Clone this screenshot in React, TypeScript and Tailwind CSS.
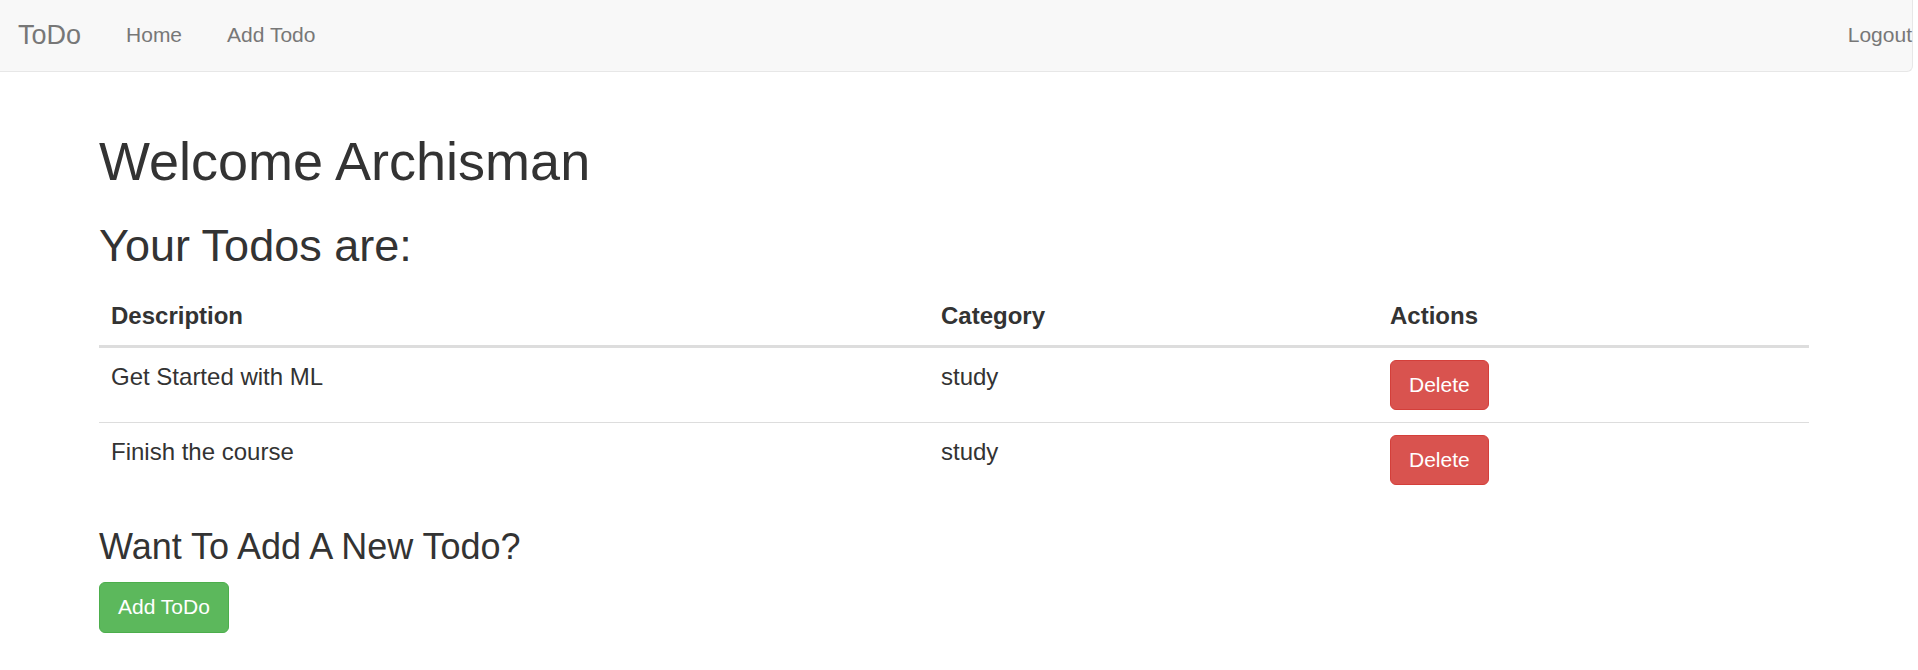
import React from "react";

const todos = [
  { description: "Get Started with ML", category: "study" },
  { description: "Finish the course", category: "study" },
];

export default function App() {
  return (
    <div
      className="min-h-[670px] bg-white text-[#333]"
      style={{ fontFamily: '"Liberation Sans", Arial, Helvetica, sans-serif' }}
    >
      {/* Navbar */}
      <nav className="flex h-[72px] w-[1913px] items-start border-r border-b border-[#e7e7e7] bg-[#f8f8f8] rounded-br-[6px] pt-[20px] text-[#777]">
        <a className="ml-[18px] text-[27px] leading-[30px]">ToDo</a>
        <a className="ml-[45px] text-[21px] leading-[30px]">Home</a>
        <a className="ml-[45px] text-[21px] leading-[30px]">Add Todo</a>
        <a className="ml-auto text-[21px] leading-[30px]">Logout</a>
      </nav>

      {/* Container */}
      <div className="flow-root ml-[99px] mt-[30px] w-[1710px]">
        <h1 className="mt-[30px] mb-[15px] text-[54px] leading-[59.4px] font-normal">
          Welcome Archisman
        </h1>
        <h2 className="mt-[30px] mb-[15px] text-[45px] leading-[49.5px] font-normal">
          Your Todos are:
        </h2>

        <table className="w-[1710px] table-fixed border-collapse text-[24px] leading-[34px]">
          <thead>
            <tr>
              <th className="w-[830px] border-b-[3px] border-[#ddd] px-[12px] pt-[13px] pb-[12px] text-left align-bottom font-bold">
                Description
              </th>
              <th className="w-[449px] border-b-[3px] border-[#ddd] px-[12px] pt-[13px] pb-[12px] text-left align-bottom font-bold">
                Category
              </th>
              <th className="w-[431px] border-b-[3px] border-[#ddd] px-[12px] pt-[13px] pb-[12px] text-left align-bottom font-bold">
                Actions
              </th>
            </tr>
          </thead>
          <tbody>
            {todos.map((t, i) => (
              <tr key={i} className={i > 0 ? "border-t border-[#ddd]" : ""}>
                <td className="px-[12px] py-[12px] align-top">{t.description}</td>
                <td className="px-[12px] py-[12px] align-top">{t.category}</td>
                <td className="px-[12px] py-[12px] align-top">
                  <button className="flex h-[50px] items-center rounded-[6px] border border-[#d43f3a] bg-[#d9534f] px-[18px] text-[21px] leading-[30px] text-white">
                    Delete
                  </button>
                </td>
              </tr>
            ))}
          </tbody>
        </table>

        <h3 className="mt-[30px] mb-[15px] text-[36px] leading-[39.6px] font-normal">
          Want To Add A New Todo?
        </h3>
        <button className="flex h-[51px] items-center rounded-[6px] border border-[#4cae4c] bg-[#5cb85c] px-[18px] text-[21px] leading-[30px] text-white">
          Add ToDo
        </button>
      </div>
    </div>
  );
}
